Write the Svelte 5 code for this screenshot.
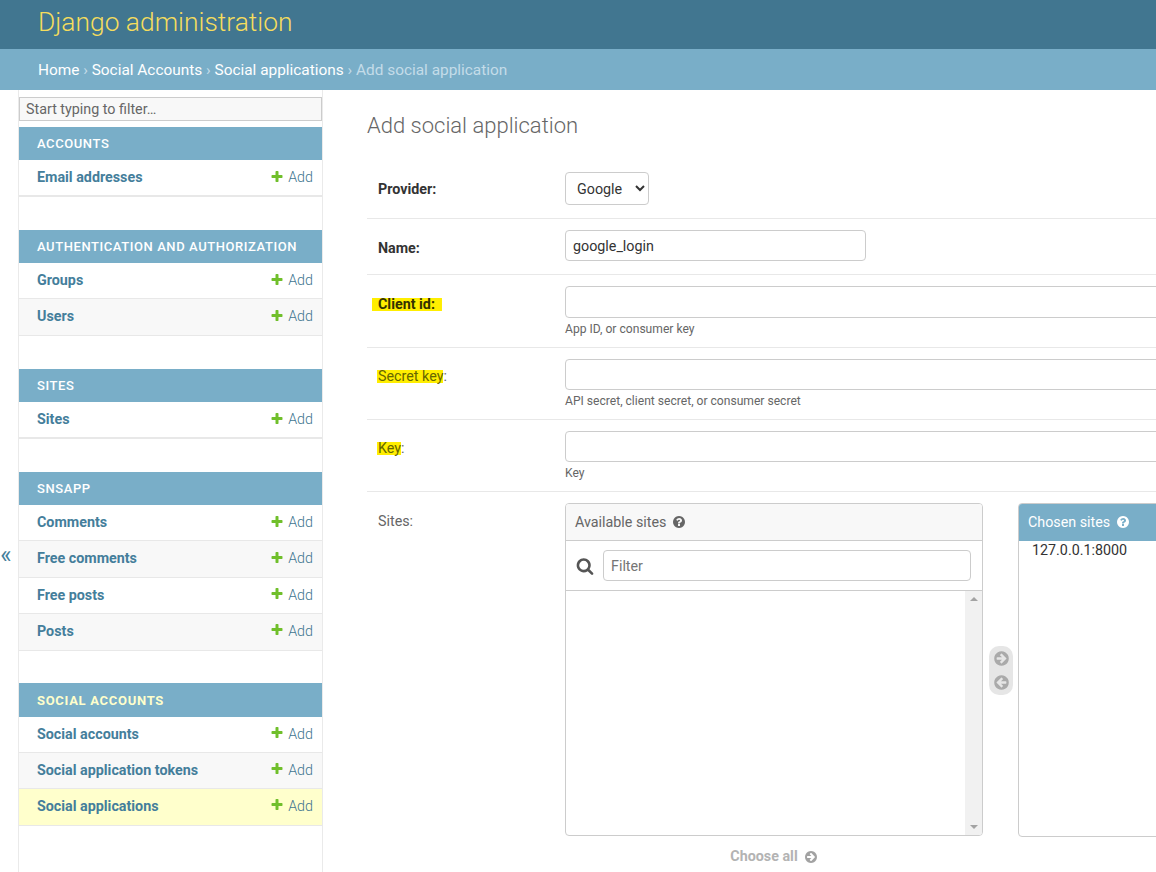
<script>
  const plus = "M1600 736v192q0 40-28 68t-68 28h-416v416q0 40-28 68t-68 28h-192q-40 0-68-28t-28-68v-416h-416q-40 0-68-28t-28-68v-192q0-40 28-68t68-28h416v-416q0-40 28-68t68-28h192q40 0 68 28t28 68v416h416q40 0 68 28t28 68z";
  const search = "M1216 832q0-185-131.500-316.500t-316.500-131.500-316.500 131.500-131.500 316.500 131.500 316.500 316.500 131.500 316.500-131.500 131.500-316.500zm512 832q0 52-38 90t-90 38q-54 0-90-38l-343-342q-179 124-399 124-143 0-273.500-55.500t-225-150-150-225-55.500-273.500 55.500-273.500 150-225 225-150 273.500-55.500 273.500 55.500 225 150 150 225 55.500 273.500q0 220-124 399l343 343q37 37 37 90z";
  const help = "M1024 1376v-192q0-14-9-23t-23-9h-192q-14 0-23 9t-9 23v192q0 14 9 23t23 9h192q14 0 23-9t9-23zm256-672q0-88-55.500-163t-138.500-116-170-41q-243 0-371 213-15 24 8 42l132 100q7 6 19 6 16 0 25-12 53-68 86-92 34-24 86-24 48 0 85.500 26t37.500 59q0 38-20 61t-68 45q-63 28-115.500 86.500t-52.500 125.500v36q0 14 9 23t23 9h192q14 0 23-9t9-23q0-19 21.500-49.500t54.500-49.500q32-18 49-28.500t46-35 44.500-48 28-60.500 12.500-81zm384 192q0 209-103 385.500t-279.500 279.500-385.500 103-385.500-103-279.500-279.500-103-385.500 103-385.500 279.500-279.500 385.500-103 385.500 103 279.500 279.500 103 385.500z";
  const arrow = "M1412 895q0-27-18-45l-91-91-362-362q-18-18-45-18t-45 18l-91 91q-18 18-18 45t18 45l189 189h-502q-26 0-45 19t-19 45v128q0 26 19 45t45 19h502l-189 189q-19 19-19 45t19 45l91 91q18 18 45 18t45-18l362-362 91-91q18-18 18-45zm252 1q0 209-103 385.500t-279.500 279.500-385.500 103-385.500-103-279.500-279.500-103-385.500 103-385.500 279.500-279.500 385.500-103 385.500 103 279.500 279.500 103 385.500z";

  const modules = [
    { name: "Accounts", models: ["Email addresses"] },
    { name: "Authentication and Authorization", models: ["Groups", "Users"] },
    { name: "Sites", models: ["Sites"] },
    { name: "Snsapp", models: ["Comments", "Free comments", "Free posts", "Posts"] },
    { name: "Social Accounts", current: true, models: ["Social accounts", "Social application tokens", "Social applications"] }
  ];
</script>

<div class="page">
  <header class="branding"><h1>Django administration</h1></header>
  <nav class="crumbs">
    <a href="#h">Home</a> › <a href="#h">Social Accounts</a> › <a href="#h">Social applications</a> › Add social application
  </nav>

  <div class="body">
    <button class="toggle" aria-label="Toggle navigation">«</button>
    <aside class="sidebar">
      <input class="navfilter" placeholder="Start typing to filter…" />
      {#each modules as m}
        <section class="module">
          <div class="caption" class:current={m.current}>{m.name}</div>
          {#each m.models as model, i}
            <div class="row" class:alt={i % 2 === 1} class:selected={model === "Social applications"}>
              <a class="model" href="#h">{model}</a>
              <a class="add" href="#h">
                <svg viewBox="0 0 1792 1792" width="14" height="14"><path fill="#70bf2b" d={plus} /></svg>
                Add
              </a>
            </div>
          {/each}
        </section>
      {/each}
    </aside>

    <main class="content">
      <h2>Add social application</h2>

      <div class="field f-provider">
        <span class="label strong">Provider:</span>
        <select class="select"><option>Google</option></select>
      </div>
      <div class="field f-name">
        <span class="label strong">Name:</span>
        <input class="text short" value="google_login" />
      </div>
      <div class="field f-client">
        <span class="label strong"><mark class="hl hl-client">Client id:</mark></span>
        <div class="ctrl">
          <input class="text long tall" />
          <p class="help">App ID, or consumer key</p>
        </div>
      </div>
      <div class="field f-secret">
        <span class="label"><mark class="hl">Secret key</mark>:</span>
        <div class="ctrl">
          <input class="text long" />
          <p class="help">API secret, client secret, or consumer secret</p>
        </div>
      </div>
      <div class="field f-key">
        <span class="label"><mark class="hl">Key</mark>:</span>
        <div class="ctrl">
          <input class="text long" />
          <p class="help">Key</p>
        </div>
      </div>

      <div class="field f-sites">
        <span class="label">Sites:</span>
        <div class="selector">
          <div class="available-col">
            <div class="box available">
              <div class="box-title">
                Available sites
                <svg viewBox="0 0 1792 1792" width="14" height="14"><path fill="#666" d={help} /></svg>
              </div>
              <div class="filter-row">
                <svg viewBox="0 0 1792 1792" width="18" height="18"><path fill="#555" d={search} /></svg>
                <input class="text filter" placeholder="Filter" />
              </div>
              <div class="list">
                <div class="scrollbar">
                  <span class="tri up"></span>
                  <span class="tri down"></span>
                </div>
              </div>
            </div>
            <div class="choose-all">
              Choose all
              <svg viewBox="0 0 1792 1792" width="14" height="14"><path fill="#666" d={arrow} /></svg>
            </div>
          </div>

          <div class="chooser">
            <svg viewBox="0 0 1792 1792" width="17" height="17"><path fill="#aaa" d={arrow} /></svg>
            <svg class="flip" viewBox="0 0 1792 1792" width="17" height="17"><path fill="#aaa" d={arrow} /></svg>
          </div>

          <div class="box chosen">
            <div class="box-title blue">
              Chosen sites
              <svg viewBox="0 0 1792 1792" width="14" height="14"><path fill="#fff" d={help} /></svg>
            </div>
            <div class="chosen-list">127.0.0.1:8000</div>
          </div>
        </div>
      </div>
    </main>
  </div>
</div>

<style>
  :global(html), :global(body) {
    margin: 0;
    overflow: hidden;
    background: #fff;
  }
  .page {
    width: 1156px;
    height: 872px;
    overflow: hidden;
    font-family: Roboto, "Liberation Sans", sans-serif;
    font-size: 14.3px;
    color: #333;
  }
  a { text-decoration: none; }

  .branding {
    height: 49px;
    box-sizing: border-box;
    background: #417690;
    padding: 0 38px;
    display: flex;
    align-items: center;
  }
  .branding h1 {
    margin: 0 0 5px;
    font-size: 26.4px;
    font-weight: 300;
    color: #f5dd5d;
  }
  .crumbs {
    height: 41px;
    box-sizing: border-box;
    background: #79aec8;
    color: #c4dce8;
    padding: 0 38px;
    display: flex;
    align-items: center;
    white-space: pre;
    font-size: 15.4px;
  }
  .crumbs a { color: #fff; }

  .body {
    display: flex;
    height: 782px;
  }
  .toggle {
    width: 19px;
    flex: none;
    box-sizing: border-box;
    padding: 148px 6px 0 0;
    border: 0;
    border-right: 1px solid #eaeaea;
    background: #fff;
    color: #447e9b;
    font-family: Roboto, sans-serif;
    font-size: 24px;
    line-height: 1;
  }
  .sidebar {
    width: 304px;
    flex: none;
    box-sizing: border-box;
    border-right: 1px solid #eaeaea;
    padding-top: 7px;
  }
  .navfilter {
    display: block;
    width: 303px;
    height: 24px;
    box-sizing: border-box;
    margin: 0 0 6px;
    padding: 0 6px;
    border: 1px solid #ccc;
    background: #f8f8f8;
    font: inherit;
    font-size: 14.3px;
    outline: 0;
  }
  .navfilter::placeholder { color: #666; opacity: 1; }
  .module { margin-bottom: 32.7px; }
  .caption {
    height: 33.3px;
    line-height: 33.3px;
    background: #79aec8;
    color: #fff;
    padding-left: 18px;
    font-size: 13px;
    font-weight: 500;
    letter-spacing: 0.58px;
    text-transform: uppercase;
  }
  .caption.current {
    color: #ffc;
    font-weight: 700;
    letter-spacing: 0.7px;
    line-height: 35px;
  }
  .row {
    height: 36.1px;
    box-sizing: border-box;
    border-bottom: 1px solid #e8e8e8;
    display: flex;
    align-items: center;
    justify-content: space-between;
    padding: 0 9px 1px 18px;
    background: #fff;
  }
  .row:last-child {
    height: 37px;
    padding-bottom: 2px;
  }
  .caption + .row:last-child {
    border-bottom-width: 2px;
    padding-bottom: 1px;
  }
  .row.alt { background: #f8f8f8; }
  .row.selected { background: #ffc; }
  .model { color: #447e9b; font-weight: 700; }
  .add { color: #417690; font-weight: 300; display: flex; align-items: center; gap: 4px; }
  .add svg { margin-top: -1px; }

  .content {
    flex: none;
    width: 1400px;
    padding: 0 0 0 44px;
  }
  h2 {
    margin: 0;
    height: 71px;
    padding-top: 22px;
    box-sizing: border-box;
    font-size: 22px;
    font-weight: 300;
    color: #666;
    line-height: 28px;
  }
  .field {
    display: flex;
    border-bottom: 1px solid #e8e8e8;
    box-sizing: border-box;
    align-items: flex-start;
    margin-right: 300px;
  }
  .f-provider { height: 58px; padding-top: 11px; }
  .f-name { height: 56px; padding-top: 11px; }
  .f-client { height: 73px; padding-top: 11px; }
  .f-secret { height: 72px; padding-top: 11px; }
  .f-key { height: 72px; padding-top: 11px; }
  .f-sites { border: 0; padding-top: 11px; }
  .label {
    width: 198px;
    flex: none;
    padding-left: 11px;
    box-sizing: border-box;
    color: #666;
    line-height: 18px;
    margin-top: 8px;
  }
  .f-name .label, .f-client .label, .f-sites .label { margin-top: 9px; }
  .strong { font-weight: 700; color: #333; }
  .hl {
    background: linear-gradient(#fe0, #fe0) center / 100% 13px no-repeat;
    color: #660;
    padding: 0 0 0 1px;
    margin-left: -1px;
  }
  .hl-client {
    color: #330;
    padding: 0 7px 0 6px;
    margin-left: -6px;
  }
  .select {
    width: 84px;
    height: 33px;
    box-sizing: border-box;
    padding: 0 3px 0 7px;
    border: 1px solid #ccc;
    border-radius: 4px;
    background: #fff;
    font: inherit;
    color: #333;
  }
  .text {
    display: block;
    box-sizing: border-box;
    border: 1px solid #ccc;
    border-radius: 4px;
    padding: 0 7px;
    font: inherit;
    color: #333;
    background: #fff;
    outline: 0;
  }
  .short { width: 301px; height: 31px; padding-top: 1px; }
  .long { width: 660px; height: 31px; }
  .long.tall { height: 32px; }
  .help {
    margin: 3px 0 0;
    font-size: 12.1px;
    line-height: 16px;
    color: #666;
  }
  .selector {
    display: flex;
    align-items: flex-start;
  }
  .available-col { width: 418px; flex: none; }
  .box {
    box-sizing: border-box;
    border: 1px solid #ccc;
    border-radius: 4px;
    overflow: hidden;
  }
  .available { height: 333px; }
  .box-title {
    height: 37px;
    box-sizing: border-box;
    display: flex;
    align-items: center;
    gap: 6px;
    padding-left: 9px;
    background: #f8f8f8;
    color: #666;
    border-bottom: 1px solid #ccc;
  }
  .box-title.blue {
    background: #79aec8;
    color: #fff;
    border-bottom: 0;
    margin: -1px -1px 0;
    height: 38px;
    padding-left: 10px;
  }
  .filter-row {
    height: 50px;
    box-sizing: border-box;
    display: flex;
    align-items: center;
    gap: 9px;
    padding: 0 11px 0 10px;
    border-bottom: 1px solid #ccc;
  }
  .filter { flex: 1; height: 31px; min-width: 0; }
  .filter::placeholder { color: #757575; opacity: 1; }
  .list {
    height: 244px;
    display: flex;
    justify-content: flex-end;
  }
  .scrollbar {
    width: 17px;
    background: #f1f1f1;
    display: flex;
    flex-direction: column;
    justify-content: space-between;
    align-items: center;
    padding: 6px 0;
    box-sizing: border-box;
  }
  .tri {
    width: 0;
    height: 0;
    border-left: 4px solid transparent;
    border-right: 4px solid transparent;
  }
  .tri.up { border-bottom: 4px solid #a3a3a3; }
  .tri.down { border-top: 4px solid #a3a3a3; }
  .choose-all {
    display: flex;
    align-items: center;
    justify-content: center;
    gap: 6px;
    height: 40px;
    font-weight: 700;
    color: #b3b3b3;
  }
  .choose-all svg { opacity: 0.6; margin-top: 2px; }
  .chooser {
    width: 24px;
    height: 49px;
    flex: none;
    margin: 143px 5px 0 6px;
    background: #e6e6e6;
    border-radius: 10px;
    display: flex;
    flex-direction: column;
    align-items: center;
    justify-content: space-between;
    padding: 4px 0;
    box-sizing: border-box;
  }
  .flip { transform: scaleX(-1); }
  .chosen { width: 400px; height: 334px; flex: none; }
  .chosen-list { padding: 1px 13px; line-height: 17px; }
</style>
